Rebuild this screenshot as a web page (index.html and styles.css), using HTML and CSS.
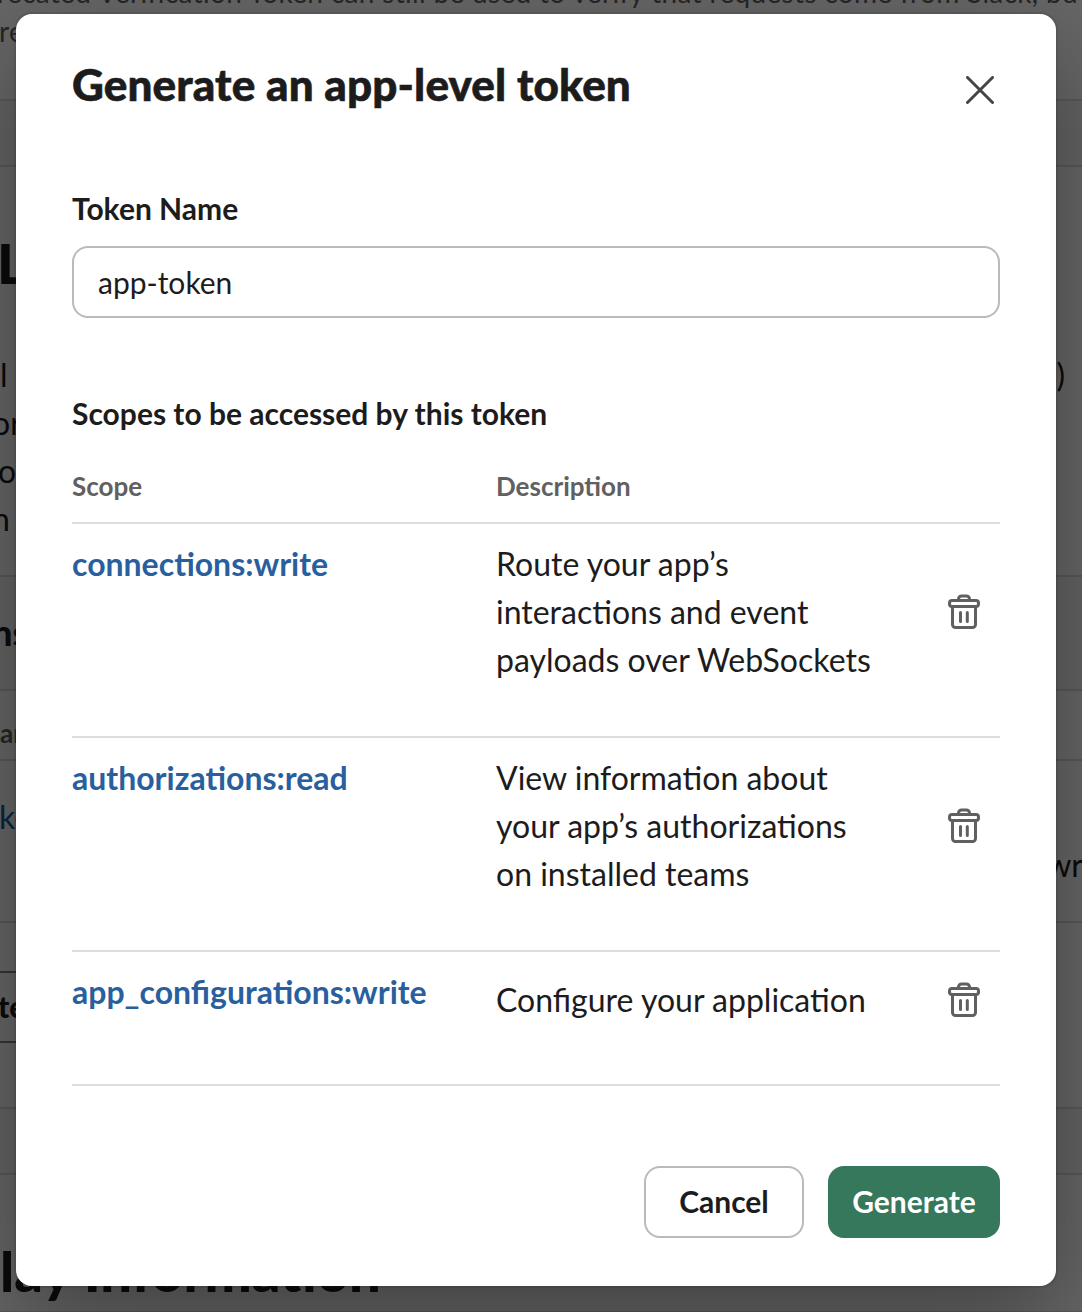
FILE: index.html
```html
<!DOCTYPE html>
<html lang="en">
<head>
<meta charset="utf-8">
<title>Generate an app-level token</title>
<link rel="stylesheet" href="styles.css">
</head>
<body>
<svg class="sprite" aria-hidden="true">
  <symbol id="trash" viewBox="0 0 32 36">
    <path d="M10.500 6V5a3 3 0 0 1 3-3h5a3 3 0 0 1 3 3v1M4.500 13v17.500a3 3 0 0 0 3 3h17a3 3 0 0 0 3-3V13M12.500 18.500V27.500M19.300 18.500V27.500"/>
    <rect x="1.500" y="6.500" width="29" height="6" rx="2.500"/>
  </symbol>
</svg>
<div class="page">
  <section class="block note">
    <p class="note-line">recated Verification Token can still be used to verify that requests come from Slack, bu</p>
    <p class="note-line second">re</p>
  </section>
  <div class="gap"></div>
  <section class="block intro">
    <h2 class="page-title">L</h2>
    <div class="copy"><span class="l1">l</span><span class="paren">)</span></div>
    <div class="copy l2">or</div>
    <div class="copy l3">o</div>
    <div class="copy l4">n</div>
  </section>
  <section class="block tokens"><h3>ns</h3></section>
  <section class="block head">ar</section>
  <section class="block entry"><span class="link">ke</span><span class="wr">wr</span></section>
  <section class="block action"><div class="page-button">te</div></section>
  <div class="gap low"></div>
  <section class="block display"><h2 class="page-title info">play Information</h2></section>
</div>
<div class="overlay">
  <main class="modal" role="dialog" aria-labelledby="title">
    <header class="modal-header">
      <h1 class="title" id="title">Generate an app-level token</h1>
      <button class="close" aria-label="Close"><svg viewBox="0 0 28 28"><path d="M1.500 1.500 26.500 26.500M26.500 1.500 1.500 26.500"/></svg></button>
    </header>
    <label class="label" for="name">Token Name</label>
    <input class="input" id="name" type="text" value="app-token">
    <h2 class="label scopes-label">Scopes to be accessed by this token</h2>
    <div class="scopes">
      <div class="row row-head"><span>Scope</span><span>Description</span></div>
      <div class="row">
        <a class="scope">connections:write</a>
        <p class="desc">Route your app’s interactions and event payloads over WebSockets</p>
        <button class="remove" aria-label="Remove"><svg><use href="#trash"/></svg></button>
      </div>
      <div class="row">
        <a class="scope">authorizations:read</a>
        <p class="desc">View information about your app’s authorizations on installed teams</p>
        <button class="remove" aria-label="Remove"><svg><use href="#trash"/></svg></button>
      </div>
      <div class="row row-short">
        <a class="scope">app_configurations:write</a>
        <p class="desc">Configure your application</p>
        <button class="remove" aria-label="Remove"><svg><use href="#trash"/></svg></button>
      </div>
    </div>
    <footer class="actions">
      <button class="button cancel">Cancel</button>
      <button class="button generate">Generate</button>
    </footer>
  </main>
</div>
</body>
</html>
```

FILE: styles.css
```css
* { box-sizing: border-box; }
body, h1, h2, h3, p { margin: 0; }
html, body { height: 1312px; overflow: hidden; }
body { font-family: Lato, "Liberation Sans", sans-serif; color: #1d1c1d; background: #fff; }
button { font: inherit; padding: 0; border: 0; background: none; }
.sprite { display: none; }

/* Page behind the dialog */
.page { height: 1312px; overflow: hidden; white-space: nowrap; font-size: 32px; }
.block { border-bottom: 2px solid #dddddd; }
.note { height: 101px; color: #616061; font-size: 28px; line-height: 40px; overflow: hidden; }
.note-line { margin-left: -3px; letter-spacing: .33px; }
.note-line:first-child { margin-top: -28px; }
.note-line.second { margin-left: -1px; margin-top: -1px; }
.gap { height: 66px; background: #f8f8f8; border-bottom: 2px solid #ddd; }
.intro { height: 410px; padding-top: 56px; }
.page-title { font-size: 56px; line-height: 80px; font-weight: 900; }
.intro .page-title { margin-left: -3px; height: 128px; }
.copy { display: flex; justify-content: space-between; height: 48px; line-height: 48px; }
.paren { margin-right: 17px; }
.l2 { margin-left: -8px; }
.l3 { margin-left: -2px; }
.l4 { margin-left: -8px; }
.tokens { height: 114px; padding-top: 28px; background: #f8f8f8; }
.tokens h3 { font-size: 36px; line-height: 54px; font-weight: 900; margin-left: -8px; }
.head { height: 70px; line-height: 85px; font-size: 26px; font-weight: 700; color: #616061; }
.entry { height: 162px; padding-top: 30px; display: flex; justify-content: space-between; line-height: 52px; }
.link { color: #1264a3; margin-left: -1px; }
.wr { padding-top: 48px; margin-right: -1px; }
.action { height: 186px; padding-top: 48px; }
.page-button { height: 72px; border: 2px solid #868686; border-width: 2px 0; width: 600px; line-height: 67px; font-size: 30px; font-weight: 900; text-indent: -2px; }
.gap.low { height: 66px; }
.display { height: 138px; padding-top: 56px; }
.info { margin-left: -32px; }

/* Dialog */
.overlay { position: absolute; inset: 0; padding: 14px 26px 26px 16px; background: rgba(0, 0, 0, .6); overflow: hidden; }
.modal { height: 1272px; padding: 40px 56px 48px; background: #fff; border-radius: 16px; box-shadow: 0 0 0 2px rgba(29, 28, 29, .13), 0 36px 96px rgba(0, 0, 0, .35); display: flex; flex-direction: column; }
.modal-header { display: flex; justify-content: space-between; height: 129px; }
.title { font-size: 44px; line-height: 60px; font-weight: 900; letter-spacing: .14px; -webkit-text-stroke: .6px #1d1c1d; }
.close { width: 28px; height: 28px; margin: 22px 6px 0 0; }
.close svg { display: block; width: 28px; height: 28px; fill: none; stroke: #454547; stroke-width: 3; stroke-linecap: round; }
.label { height: 63px; font-size: 30px; line-height: 50px; font-weight: 700; }
.input { height: 72px; border: 2px solid #bbbabb; border-radius: 16px; padding: 0 24px; font: 30px Lato, sans-serif; color: #1d1c1d; }
.scopes-label { margin-top: 70px; height: 64px; }
.scopes { border-bottom: 2px solid #dddddd; }
.row { display: grid; grid-template-columns: 424px 380px 1fr; height: 214px; padding-top: 16px; border-top: 2px solid #dddddd; font-size: 32px; line-height: 48px; }
.row-head { height: 70px; padding: 11px 0 0; border: 0; font-size: 26px; line-height: 46px; font-weight: 700; color: #616061; }
.scope { color: #2a5f9e; font-weight: 700; }
.remove { width: 32px; height: 36px; margin: 54px 0 0 72px; }
.remove svg { display: block; width: 32px; height: 36px; fill: none; stroke: #616061; stroke-width: 3; stroke-linecap: round; stroke-linejoin: round; }
.row-short { height: 134px; }
.row-short .desc { margin-top: 8px; }
.row-short .remove { margin-top: 14px; }
.actions { display: flex; justify-content: flex-end; gap: 24px; margin-top: auto; }
.button { height: 72px; border-radius: 16px; font-size: 30px; font-weight: 700; line-height: 66px; padding-bottom: 2px; }
.cancel { width: 160px; border: 2px solid #bbbabb; color: #1d1c1d; }
.generate { width: 172px; background: #35785b; color: #fff; }
```
